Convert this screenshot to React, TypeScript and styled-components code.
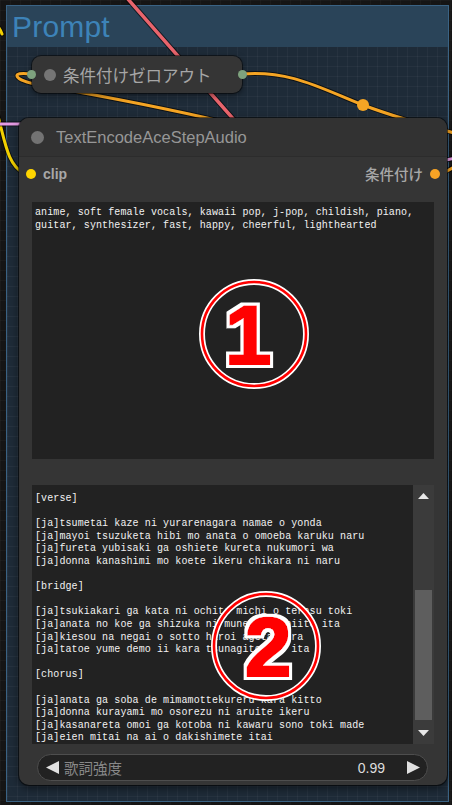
import * as React from 'react';
import styled, { createGlobalStyle } from 'styled-components';

const GlobalStyle = createGlobalStyle`
  html, body {
    margin: 0;
    padding: 0;
    background: #151515;
  }
  body {
    font-family: "Liberation Sans", Arial, "Noto Sans CJK JP", sans-serif;
  }
`;

const gridLines = (alpha: number) => `
  background-image:
    linear-gradient(rgba(255, 255, 255, ${alpha}) 1px, transparent 1px),
    linear-gradient(90deg, rgba(255, 255, 255, ${alpha}) 1px, transparent 1px);
  background-size: 10px 10px;
`;

const Canvas = styled.div`
  position: relative;
  width: 452px;
  height: 805px;
  overflow: hidden;
  background-color: #151515;
  ${gridLines(0.025)}
`;

const Group = styled.section`
  position: absolute;
  left: 6px;
  top: 5px;
  width: 443px;
  height: 797px;
  box-sizing: border-box;
  display: flex;
  flex-direction: column;
  border: 1.5px solid #3a6384;
  background-color: #1e2b38;
  ${gridLines(0.035)}
`;

const GroupTitle = styled.header`
  height: 41px;
  display: flex;
  align-items: center;
  padding-left: 5px;
  background: #2a4459;
  color: #3d83b8;
  font-size: 30px;
  letter-spacing: 0.2px;
`;

const Wires = styled.svg`
  position: absolute;
  inset: 0;
  width: 452px;
  height: 805px;
  pointer-events: none;
`;

const CollapsedNode = styled.div`
  position: absolute;
  left: 32px;
  top: 56px;
  width: 210px;
  height: 37px;
  box-sizing: border-box;
  display: flex;
  align-items: center;
  gap: 7px;
  padding-left: 12px;
  border-radius: 9px;
  background: #353535;
  box-shadow: 0 0 0 1px rgba(0, 0, 0, 0.45), 0 2px 6px rgba(0, 0, 0, 0.5);
  color: #a6a6a6;
  font-family: "Noto Sans CJK JP", sans-serif;
  font-size: 16.5px;
`;

const Dot = styled.span<{ $size: number; $color: string }>`
  flex: none;
  width: ${p => p.$size}px;
  height: ${p => p.$size}px;
  border-radius: 50%;
  background: ${p => p.$color};
`;

const EdgeSlot = styled(Dot)<{ $side: 'left' | 'right' }>`
  position: absolute;
  top: 50%;
  margin-top: -${p => p.$size / 2}px;
  ${p => p.$side}: -${p => p.$size / 2 + 0.5}px;
`;

const Node = styled.div`
  position: absolute;
  left: 19px;
  top: 118px;
  width: 428px;
  height: 667px;
  display: flex;
  flex-direction: column;
  border-radius: 10px;
  overflow: hidden;
  background: #353535;
  box-shadow: 0 0 0 1px rgba(0, 0, 0, 0.5), 0 3px 8px rgba(0, 0, 0, 0.55);
`;

const NodeTitle = styled.div`
  height: 39px;
  flex: none;
  box-sizing: border-box;
  display: flex;
  align-items: center;
  gap: 12px;
  padding-left: 12px;
  background: #323232;
  border-bottom: 1px solid #2c2c2c;
  color: #979797;
  font-size: 16.5px;
`;

const SlotRow = styled.div`
  height: 33px;
  flex: none;
  display: flex;
  align-items: center;
  justify-content: space-between;
  padding: 0 7px;
`;

const Slot = styled.div`
  display: flex;
  align-items: center;
  gap: 7px;
  color: #a8a8a8;
  font-size: 14px;
  font-weight: bold;
`;

const SlotLabelJa = styled.span`
  font-family: "Noto Sans CJK JP", sans-serif;
  font-weight: 500;
  font-size: 14.5px;
`;

const NodeBody = styled.div`
  flex: 1;
  display: flex;
  flex-direction: column;
  padding: 12px 13px 4px;
`;

const TextBox = styled.div<{ $height: number }>`
  position: relative;
  height: ${p => p.$height}px;
  flex: none;
  display: flex;
  background: #222222;
  overflow: hidden;
`;

const TextContent = styled.pre<{ $padTop: number }>`
  flex: 1;
  margin: 0;
  padding: ${p => p.$padTop}px 3px 0;
  font-family: "Liberation Mono", "Noto Sans CJK JP", monospace;
  font-size: 10px;
  line-height: 12.6px;
  letter-spacing: 0.1px;
  color: #f2f2f2;
  white-space: pre-wrap;
  overflow: hidden;
`;

const Spacer = styled.div<{ $h: number }>`
  height: ${p => p.$h}px;
  flex: none;
`;

const Scrollbar = styled.div`
  width: 21px;
  flex: none;
  display: flex;
  flex-direction: column;
  background: #3b3b3b;
`;

const ScrollArrow = styled.div`
  height: 22px;
  flex: none;
  display: flex;
  align-items: center;
  justify-content: center;
`;

const ScrollTrack = styled.div`
  position: relative;
  flex: 1;
`;

const ScrollThumb = styled.div`
  position: absolute;
  left: 2px;
  right: 2px;
  background: #5e5e5e;
`;

const Slider = styled.div`
  height: 27px;
  flex: none;
  box-sizing: border-box;
  margin: 10px 6px 0 5px;
  display: flex;
  align-items: center;
  padding: 0 7px 0 8px;
  border: 1.5px solid #4e4e4e;
  border-radius: 14px;
  background: #222222;
`;

const SliderLabel = styled.span`
  flex: 1;
  margin-left: 5px;
  color: #888888;
  font-family: "Noto Sans CJK JP", sans-serif;
  font-size: 14.5px;
`;

const SliderValue = styled.span`
  margin-right: 22px;
  color: #dddddd;
  font-size: 14px;
`;

const Badge = styled.svg<{ $cx: number; $cy: number }>`
  position: absolute;
  left: ${p => p.$cx - 58}px;
  top: ${p => p.$cy - 58}px;
  width: 116px;
  height: 116px;
  pointer-events: none;
`;

// red digit thickened, with a white outline round it (one text element)
const CircledNumber: React.FC<{ n: string; id: string; cx: number; cy: number; dx?: number }> = ({
  n,
  id,
  cx,
  cy,
  dx = 0,
}) => (
  <Badge $cx={cx} $cy={cy} viewBox="0 0 116 116">
    <defs>
      <filter id={id} x="-20%" y="-20%" width="140%" height="140%">
        <feMorphology in="SourceAlpha" operator="dilate" radius="4.2" result="outer" />
        <feFlood floodColor="#ffffff" />
        <feComposite in2="outer" operator="in" result="white" />
        <feMorphology in="SourceAlpha" operator="dilate" radius="1.3" result="inner" />
        <feFlood floodColor="#ff0000" />
        <feComposite in2="inner" operator="in" result="red" />
        <feMerge>
          <feMergeNode in="white" />
          <feMergeNode in="red" />
        </feMerge>
      </filter>
    </defs>
    <circle cx="58" cy="58" r="52" fill="none" stroke="#ffffff" strokeWidth="6" />
    <circle cx="58" cy="58" r="52" fill="none" stroke="#ff0000" strokeWidth="2.6" />
    <text
      x={58 + dx}
      y="88"
      textAnchor="middle"
      fontFamily="Liberation Sans, Arial, sans-serif"
      fontWeight="bold"
      fontSize="84"
      fill="#ff0000"
      filter={`url(#${id})`}
    >
      {n}
    </text>
  </Badge>
);

const Triangle: React.FC<{ dir: 'left' | 'right' | 'up' | 'down'; w: number; h: number; color: string }> = ({
  dir,
  w,
  h,
  color,
}) => {
  const pts = {
    left: `${w},0 ${w},${h} 0,${h / 2}`,
    right: `0,0 0,${h} ${w},${h / 2}`,
    up: `0,${h} ${w},${h} ${w / 2},0`,
    down: `0,0 ${w},0 ${w / 2},${h}`,
  }[dir];
  return (
    <svg width={w} height={h} viewBox={`0 0 ${w} ${h}`} style={{ flex: 'none' }}>
      <polygon points={pts} fill={color} />
    </svg>
  );
};

const Wire: React.FC<{ d: string; color: string; width?: number }> = ({ d, color, width = 3 }) => (
  <>
    <path d={d} fill="none" stroke="rgba(0,0,0,0.6)" strokeWidth={width + 2} strokeLinecap="round" />
    <path d={d} fill="none" stroke={color} strokeWidth={width} strokeLinecap="round" />
  </>
);

const tagsText =
  'anime, soft female vocals, kawaii pop, j-pop, childish, piano,\nguitar, synthesizer, fast, happy, cheerful, lighthearted';

const lyricsText = `[verse]

[ja]tsumetai kaze ni yurarenagara namae o yonda
[ja]mayoi tsuzuketa hibi mo anata o omoeba karuku naru
[ja]fureta yubisaki ga oshiete kureta nukumori wa
[ja]donna kanashimi mo koete ikeru chikara ni naru

[bridge]

[ja]tsukiakari ga kata ni ochite michi o terasu toki
[ja]anata no koe ga shizuka ni mune ni hibiite ita
[ja]kiesou na negai o sotto hiroi ageta nara
[ja]tatoe yume demo ii kara tsunagitomete ita

[chorus]

[ja]anata ga soba de mimamottekureru kara kitto
[ja]donna kurayami mo osorezu ni aruite ikeru
[ja]kasanareta omoi ga kotoba ni kawaru sono toki made
[ja]eien mitai na ai o dakishimete itai`;

const App: React.FC = () => (
  <>
    <GlobalStyle />
    <Canvas>
      <Group>
        <GroupTitle>Prompt</GroupTitle>
      </Group>

      <Wires viewBox="0 0 452 805">
        <Wire d="M 127 -2 L 250 138" color="#e8646c" width={3.5} />
        <Wire d="M -6 22 Q 0 28 2 34" color="#f2d000" />
        <Wire d="M -2 116 C 5 142, 8 166, 24 173" color="#f2d000" />
        <Wire d="M -2 124 L 22 124" color="#e59be3" />
        <Wire d="M 31 74 C 10 71, 12 80, 40 85 C 100 96, 170 108, 240 126" color="#f5a524" />
        <Wire d="M 242 74 C 290 70, 320 88, 363 105 C 400 119, 430 127, 470 137" color="#f5a524" />
        <Wire d="M 446 160 L 456 158" color="#e59be3" />
        <Wire d="M 438 176 L 456 166" color="#f5a524" />
        <circle cx="363" cy="105" r="6" fill="#f5a524" />
      </Wires>

      <CollapsedNode>
        <EdgeSlot $size={9} $color="#7ea27e" $side="left" />
        <Dot $size={12} $color="#757575" />
        条件付けゼロアウト
        <EdgeSlot $size={9} $color="#7ea27e" $side="right" />
      </CollapsedNode>

      <Node>
        <NodeTitle>
          <Dot $size={13} $color="#737373" />
          TextEncodeAceStepAudio
        </NodeTitle>
        <SlotRow>
          <Slot>
            <Dot $size={10} $color="#ffd500" />
            clip
          </Slot>
          <Slot>
            <SlotLabelJa>条件付け</SlotLabelJa>
            <Dot $size={10} $color="#f7a325" />
          </Slot>
        </SlotRow>
        <NodeBody>
          <TextBox $height={257}>
            <TextContent $padTop={5}>{tagsText}</TextContent>
            <CircledNumber n="1" id="badge-one" cx={222} cy={132} dx={-6} />
          </TextBox>
          <Spacer $h={26} />
          <TextBox $height={259}>
            <TextContent $padTop={8}>{lyricsText}</TextContent>
            <CircledNumber n="2" id="badge-two" cx={234} cy={161} dx={2} />
            <Scrollbar>
              <ScrollArrow>
                <Triangle dir="up" w={11} h={6} color="#e8e8e8" />
              </ScrollArrow>
              <ScrollTrack>
                <ScrollThumb style={{ top: 83, height: 130 }} />
              </ScrollTrack>
              <ScrollArrow>
                <Triangle dir="down" w={11} h={6} color="#e8e8e8" />
              </ScrollArrow>
            </Scrollbar>
          </TextBox>
          <Slider>
            <Triangle dir="left" w={13} h={13} color="#e0e0e0" />
            <SliderLabel>歌詞強度</SliderLabel>
            <SliderValue>0.99</SliderValue>
            <Triangle dir="right" w={13} h={13} color="#e0e0e0" />
          </Slider>
        </NodeBody>
      </Node>
    </Canvas>
  </>
);

export default App;
